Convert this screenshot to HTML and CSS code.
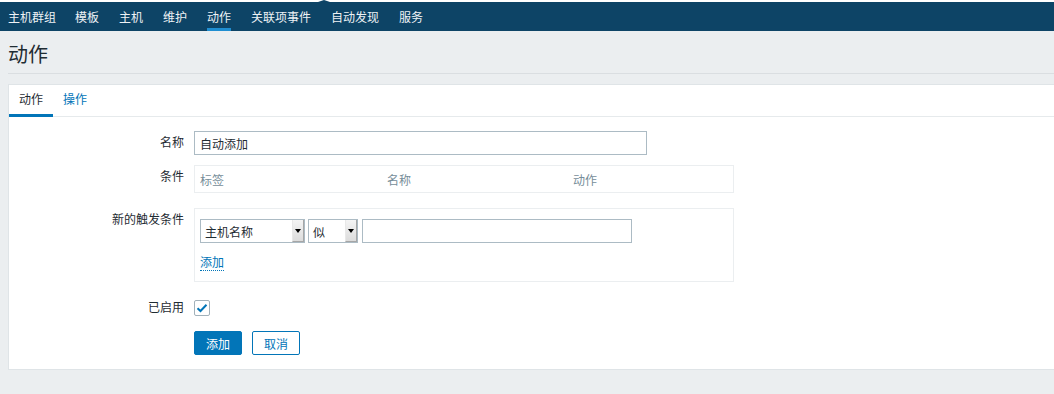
FILE: index.html
```
<!DOCTYPE html>
<html lang="zh-CN">
<head>
    <meta charset="UTF-8">
    <title>动作</title>
    <link rel="stylesheet" href="styles.css">
</head>
<body>
    <nav class="subnav">
        <a href="#">主机群组</a>
        <a href="#">模板</a>
        <a href="#">主机</a>
        <a href="#">维护</a>
        <a href="#" class="active">动作</a>
        <a href="#">关联项事件</a>
        <a href="#">自动发现</a>
        <a href="#">服务</a>
    </nav>

    <header class="page-header">
        <h1>动作</h1>
    </header>

    <div class="card">
        <ul class="tabs">
            <li class="active">动作</li>
            <li><a href="#">操作</a></li>
        </ul>

        <form class="form">
            <div class="row">
                <label>名称</label>
                <input type="text" class="text-input name-input" value="自动添加">
            </div>

            <div class="row">
                <label>条件</label>
                <div class="cond-table">
                    <span>标签</span>
                    <span>名称</span>
                    <span>动作</span>
                </div>
            </div>

            <div class="row row-trigger">
                <label>新的触发条件</label>
                <div class="trigger-box">
                    <div class="trigger-line">
                        <div class="select select-wide"><span>主机名称</span><i class="arrow"></i></div>
                        <div class="select select-small"><span>似</span><i class="arrow"></i></div>
                        <input type="text" class="text-input value-input">
                    </div>
                    <a href="#" class="link">添加</a>
                </div>
            </div>

            <div class="row row-check">
                <label>已启用</label>
                <span class="checkbox">
                    <svg width="12" height="10" viewBox="0 0 12 10"><path d="M1.5 5.2 L4.5 8 L10.5 1.8" fill="none" stroke="#0275b8" stroke-width="2"/></svg>
                </span>
            </div>

            <div class="row row-buttons">
                <span></span>
                <div class="buttons">
                    <button type="button" class="btn btn-primary">添加</button>
                    <button type="button" class="btn btn-alt">取消</button>
                </div>
            </div>
        </form>
    </div>
</body>
</html>
```

FILE: styles.css
```
body {
    margin: 0;
    padding-top: 2px;
    font-family: "Liberation Sans", Arial, "Noto Sans CJK SC", sans-serif;
    font-size: 12px;
    color: #1f2c33;
    background-color: #ebeef0;
    overflow: hidden;
}
html {
    background-color: #ebeef0;
}
body::before {
    content: "";
    display: block;
    position: absolute;
    top: 0;
    left: 0;
    right: 0;
    height: 2px;
    background-color: #fff;
}
.subnav {
    position: relative;
    display: flex;
    gap: 20px;
    height: 29px;
    padding-left: 8px;
    background-color: #0d4466;
}
.subnav::before {
    content: "";
    position: absolute;
    top: -2px;
    left: 318px;
    border-left: 6px solid transparent;
    border-right: 6px solid transparent;
    border-bottom: 2px solid #0d4466;
}
.subnav a {
    display: flex;
    align-items: center;
    color: #eef2f5;
    text-decoration: none;
    border-bottom: 3px solid transparent;
    padding-top: 2px;
}
.subnav a:first-child {
    margin-right: -1px;
}
.subnav a.active {
    border-bottom-color: #1f8ed1;
}
.page-header {
    margin: 0 0 10px 8px;
    height: 42px;
    border-bottom: 1px solid #dadee1;
}
h1 {
    margin: 0;
    padding-top: 12px;
    font-size: 20px;
    font-weight: normal;
    line-height: 24px;
    color: #1f2c33;
}
.card {
    margin-left: 8px;
    background-color: #fff;
    border: 1px solid #dfe4e7;
    border-right: none;
    height: 286px;
    box-sizing: border-box;
}
.tabs {
    display: flex;
    margin: 0;
    padding: 0;
    list-style: none;
    height: 31px;
    border-bottom: 1px solid #e6eaec;
}
.tabs li {
    padding: 2px 10px 0;
    line-height: 27px;
    border-bottom: 3px solid transparent;
    margin-bottom: -1px;
}
.tabs li.active {
    border-bottom-color: #0275b8;
}
.tabs a {
    color: #0275b8;
    text-decoration: none;
}
.form {
    display: flex;
    flex-direction: column;
    padding-top: 14px;
}
.row {
    display: grid;
    grid-template-columns: 175px 1fr;
    column-gap: 10px;
    align-items: start;
    margin-bottom: 10px;
}
.row label {
    text-align: right;
    line-height: 24px;
    color: #1f2c33;
}
.text-input {
    box-sizing: border-box;
    height: 24px;
    padding: 0 5px;
    border: 1px solid #acbbc4;
    font-family: inherit;
    font-size: 12px;
    color: #1f2c33;
    outline: none;
}
.name-input {
    width: 453px;
}
.cond-table {
    display: grid;
    grid-template-columns: 187px 186px 1fr;
    width: 540px;
    height: 28px;
    box-sizing: border-box;
    padding-left: 5px;
    align-items: center;
    border: 1px solid #ebeef0;
    color: #768d99;
    padding-top: 1px;
}
.row-trigger {
    margin-top: 5px;
    margin-bottom: 12px;
}
.trigger-box {
    width: 540px;
    height: 74px;
    box-sizing: border-box;
    border: 1px solid #ebeef0;
    padding: 10px 5px 0;
}
.trigger-line {
    display: flex;
    gap: 3px;
}
.select {
    display: flex;
    box-sizing: border-box;
    height: 24px;
    border: 1px solid #acbbc4;
    padding-left: 4px;
    align-items: center;
    justify-content: space-between;
}
.select-wide {
    width: 105px;
}
.select-small {
    width: 50px;
}
.arrow {
    position: relative;
    width: 12px;
    height: 22px;
    box-sizing: border-box;
    background: linear-gradient(#f4f4f4, #dcdcdc);
    border-left: 1px solid #e8e8e8;
    border-right: 1px solid #a6a6a6;
    border-bottom: 1px solid #a6a6a6;
}
.arrow::after {
    content: "";
    position: absolute;
    left: 2px;
    top: 9px;
    border-left: 3px solid transparent;
    border-right: 3px solid transparent;
    border-top: 4px solid #000;
}
.value-input {
    width: 270px;
    margin-left: 1px;
}
.link {
    display: inline-block;
    margin-top: 13px;
    color: #0275b8;
    text-decoration: none;
    border-bottom: 1px dotted #0275b8;
    line-height: 14px;
}
.row-check {
    align-items: center;
    margin-top: 2px;
    margin-bottom: 11px;
}
.checkbox {
    display: flex;
    align-items: center;
    justify-content: center;
    width: 16px;
    height: 16px;
    box-sizing: border-box;
    border: 1px solid #a2b1ba;
    border-radius: 2px;
}
.buttons {
    display: flex;
    gap: 10px;
}
.btn {
    box-sizing: border-box;
    width: 48px;
    height: 24px;
    border-radius: 2px;
    font-family: inherit;
    font-size: 12px;
    padding: 0;
    cursor: pointer;
}
.btn-primary {
    background-color: #0275b8;
    border: 1px solid #0275b8;
    color: #fff;
}
.btn-alt {
    background-color: #fff;
    border: 1px solid #0275b8;
    color: #0275b8;
}
```
